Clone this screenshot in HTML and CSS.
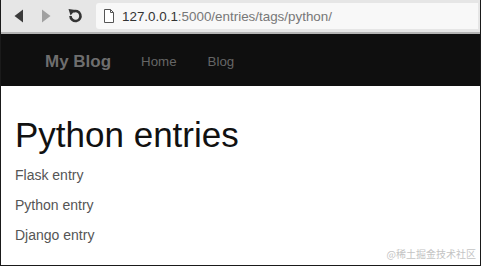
FILE: index.html
```html
<!DOCTYPE html>
<html>
<head>
<meta charset="utf-8">
<link rel="stylesheet" href="styles.css">
</head>
<body>
<div class="window">
  <div class="toolbar">
    <div class="nav-buttons">
      <svg class="btn" width="14" height="16" viewBox="0 0 14 16"><polygon points="11,1.5 11,14.5 2.5,8" fill="#3a3a3a"/></svg>
      <svg class="btn" width="14" height="16" viewBox="0 0 14 16"><polygon points="3,1.5 3,14.5 11.5,8" fill="#a0a0a0"/></svg>
      <svg class="btn reload" width="18" height="18" viewBox="0 0 18 18"><path d="M4.5 9 A5 5 0 1 0 7 4.7" fill="none" stroke="#333" stroke-width="2.6"/><polygon points="2.5,2 9.5,3 4.5,8.5" fill="#333"/></svg>
    </div>
    <div class="address">
      <svg class="file" width="12" height="16" viewBox="0 0 12 16"><path d="M1.5 1.5 H7.5 L10.5 4.5 V14.5 H1.5 Z" fill="#fff" stroke="#555" stroke-width="1"/><path d="M7.5 1.5 V4.5 H10.5" fill="none" stroke="#555" stroke-width="1"/></svg>
      <span class="host">127.0.0.1</span><span class="path">:5000/entries/tags/python/</span>
    </div>
  </div>
  <div class="navbar">
    <span class="brand">My Blog</span>
    <span class="link">Home</span>
    <span class="link">Blog</span>
  </div>
  <div class="content">
    <h1 class="title">Python entries</h1>
    <ul class="entries">
      <li>Flask entry</li>
      <li>Python entry</li>
      <li>Django entry</li>
    </ul>
    <div class="watermark">@稀土掘金技术社区</div>
  </div>
</div>
</body>
</html>
```
FILE: styles.css
```css
html, body { margin: 0; padding: 0; }
body { width: 481px; height: 266px; overflow: hidden; font-family: "Liberation Sans", Arial, sans-serif; }
.window {
  width: 481px; height: 266px; box-sizing: border-box;
  border-left: 1px solid #1a1a1a; border-right: 1px solid #1a1a1a; border-bottom: 1px solid #1a1a1a;
  display: flex; flex-direction: column;
}
.toolbar {
  height: 34px; box-sizing: border-box;
  background: #e6e6e6; border-bottom: 2px solid #b4b4b4;
  display: flex; align-items: center;
  padding-left: 11px; padding-right: 2px;
}
.nav-buttons { display: flex; align-items: center; gap: 13px; width: 84px; }
.btn { display: block; }
.address {
  flex: 1; height: 26px; background: #f8f8f8;
  border-radius: 3px 0 0 3px;
  display: flex; align-items: center; padding-left: 7px;
  font-family: "Liberation Sans", sans-serif; font-size: 13.4px;
}
.file { margin-right: 7px; }
.host { color: #333; }
.path { color: #777; }
.navbar {
  height: 52px; box-sizing: border-box; background: #0f0f0f;
  display: flex; align-items: center; padding-left: 44px; padding-top: 3px;
}
.brand { color: #6e6e6e; font-size: 17px; font-weight: bold; margin-right: 30px; }
.link { color: #666; font-size: 13.3px; margin-right: 31px; }
.content { flex: 1; background: #fff; padding-left: 14px; position: relative; }
.title { margin: 29px 0 0; font-size: 35px; font-weight: normal; color: #111; line-height: 40px; }
.entries { list-style: none; margin: 11px 0 0; padding: 0; }
.entries li { color: #555; font-size: 14px; height: 30px; line-height: 18px; }
.watermark {
  position: absolute; right: 4px; bottom: 4px;
  font-family: "Noto Sans CJK SC", sans-serif; font-size: 10px; color: #c4c4c4;
}
```
